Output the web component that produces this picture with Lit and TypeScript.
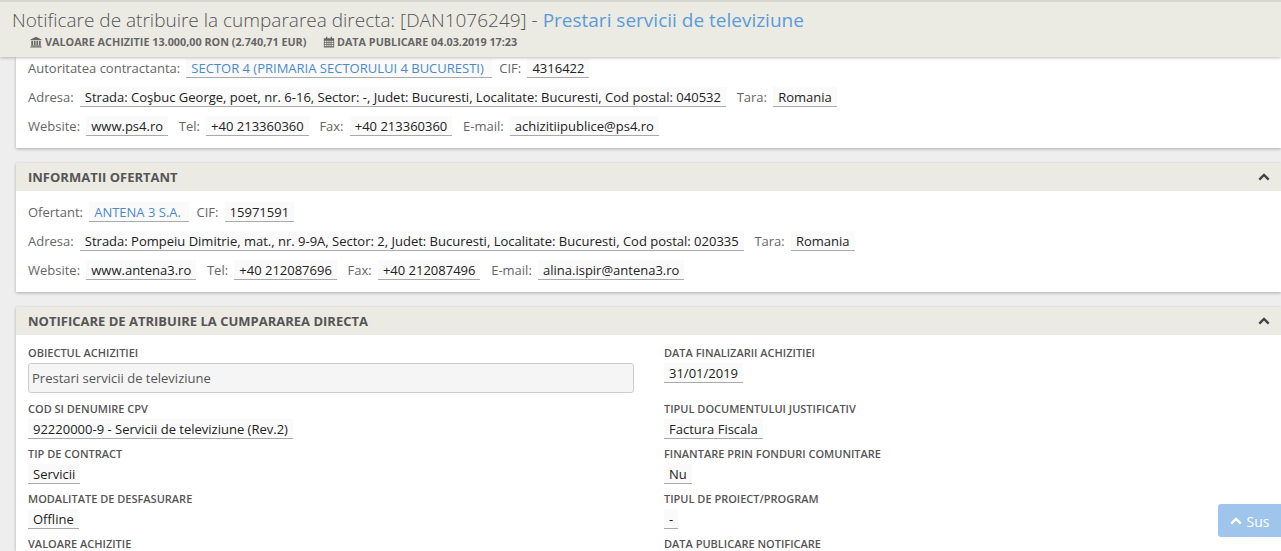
import {html, css, LitElement} from 'lit';
import {customElement} from 'lit/decorators.js';

const chevron = html`<svg class="chev" viewBox="0 0 12 8"><path d="M1.3 6.6 6 1.9l4.7 4.7" fill="none" stroke="currentColor" stroke-width="2.4"/></svg>`;

@customElement('app-root')
export class AppRoot extends LitElement {
  static styles = css`
    :host {
      display: block;
      height: 551px;
      overflow: hidden;
      position: relative;
      background: #eeeeee;
      font-family: "Open Sans", sans-serif;
      font-size: 13px;
      color: #666;
    }
    .top {
      position: absolute;
      top: 0;
      left: 0;
      right: 0;
      height: 57px;
      box-sizing: border-box;
      padding: 6px 12px 0;
      background: #ecebe3;
      border-top: 2px solid #d6d6d0;
      box-shadow: 0 1px 3px rgba(0, 0, 0, 0.25);
      z-index: 2;
    }
    .title {
      font-size: 19px;
      font-weight: 300;
      line-height: 24px;
      color: #555;
      white-space: nowrap;
    }
    .title a {
      color: #5a9bdc;
      font-weight: 400;
    }
    .meta {
      display: flex;
      gap: 17px;
      margin: 3px 0 0 18px;
      font-size: 10.8px;
      font-weight: 700;
      line-height: 14px;
      color: #666;
      white-space: nowrap;
    }
    .meta span {
      display: flex;
      align-items: center;
      gap: 3px;
    }
    .meta svg {
      width: 12px;
      height: 12px;
      fill: #666;
    }
    .meta .cal {
      margin-right: -1.5px;
    }
    .page {
      padding: 57px 0 0 16px;
    }
    .card {
      background: #fff;
      box-shadow: 0 1px 3px rgba(0, 0, 0, 0.28);
      margin-bottom: 15px;
    }
    .head {
      display: flex;
      justify-content: space-between;
      align-items: center;
      height: 28px;
      padding: 0 12px;
      background: #ecebe3;
      font-size: 13px;
      font-weight: 700;
      color: #555;
    }
    .chev {
      width: 12px;
      height: 8px;
      color: #444;
      margin-right: -1px;
    }
    .rows {
      display: flex;
      flex-direction: column;
      gap: 9px;
      padding: 11px 12px 12px;
    }
    .first {
      padding-top: 1px;
    }
    .row {
      display: flex;
      align-items: center;
      height: 20px;
      white-space: nowrap;
    }
    .row label {
      margin-right: 6.2px;
    }
    .val {
      display: inline-block;
      height: 19px;
      line-height: 21px;
      padding: 0 5px;
      background: #fafafa;
      border-bottom: 1px solid #aaa;
      color: #222;
      margin-right: 10.7px;
      white-space: nowrap;
    }
    .val.link {
      color: #4a8ac9;
      padding-right: 8px;
      margin-right: 7.5px;
    }
    .grid {
      display: grid;
      grid-template-columns: 606px 1fr;
      column-gap: 30px;
      padding: 11px 12px 0;
    }
    .field {
      display: flex;
      flex-direction: column;
      align-items: flex-start;
    }
    .field b {
      font-size: 11px;
      font-weight: 600;
      line-height: 14px;
      color: #555;
      white-space: nowrap;
    }
    .field .val {
      margin-top: 3px;
      margin-bottom: 8px;
      margin-right: 0;
    }
    .input {
      align-self: stretch;
      box-sizing: border-box;
      height: 30px;
      line-height: 28px;
      margin: 3px 0 9px;
      padding: 0 3px;
      border: 1px solid #ccc;
      border-radius: 3px;
      background: #f5f5f5;
      color: #555;
    }
    .sus {
      position: absolute;
      right: 0;
      top: 504px;
      width: 63px;
      height: 33px;
      display: flex;
      align-items: center;
      justify-content: center;
      gap: 5px;
      padding-top: 1px;
      box-sizing: border-box;
      background: #9fc5ec;
      border-radius: 3px 0 0 3px;
      color: #fff;
      font-size: 14px;
      z-index: 3;
    }
    .sus .chev {
      color: #fff;
      margin: 0;
    }
  `;

  row(items: [string, string, boolean?][]) {
    return html`<div class="row">
      ${items.map(([l, v, link]) => html`<label>${l}</label><span class="val ${link ? 'link' : ''}">${v}</span>`)}
    </div>`;
  }

  field(label: string, value: string) {
    return html`<div class="field"><b>${label}</b><span class="val">${value}</span></div>`;
  }

  render() {
    return html`
      <div class="top">
        <div class="title">Notificare de atribuire la cumpararea directa: [DAN1076249] - <a>Prestari servicii de televiziune</a></div>
        <div class="meta">
          <span>
            <svg viewBox="0 0 14 14"><path d="M7 1 13.5 4v1h-13V4zM1.5 5.8h2v5h-2zM4.5 5.8h2v5h-2zM7.5 5.8h2v5h-2zM10.5 5.8h2v5h-2zM1 11.2h12v1H1zM.3 12.5h13.4v1H.3z"/></svg>
            VALOARE ACHIZITIE 13.000,00 RON (2.740,71 EUR)
          </span>
          <span>
            <svg class="cal" viewBox="0 0 14 14"><path d="M1 2.5h2.5V1h1.500v1.500h4V1h1.500v1.500H13v11H1zM2 5.500v1.500h2V5.500zm3 0v1.500h1.500V5.500zm2.500 0v1.500H9V5.500zm2.500 0v1.500h2V5.500zM2 8v1.500h2V8zm3 0v1.500h1.500V8zm2.500 0v1.500H9V8zM10 8v1.500h2V8zM2 10.500V12h2v-1.500zm3 0V12h1.500v-1.500zm2.500 0V12H9v-1.500zm2.500 0V12h2v-1.500z" fill-rule="evenodd"/></svg>
            DATA PUBLICARE 04.03.2019 17:23
          </span>
        </div>
      </div>
      <div class="page">
        <div class="card">
          <div class="rows first">
            ${this.row([['Autoritatea contractanta:', 'SECTOR 4 (PRIMARIA SECTORULUI 4 BUCURESTI)', true], ['CIF:', '4316422']])}
            ${this.row([['Adresa:', 'Strada: Coşbuc George, poet, nr. 6-16, Sector: -, Judet: Bucuresti, Localitate: Bucuresti, Cod postal: 040532'], ['Tara:', 'Romania']])}
            ${this.row([['Website:', 'www.ps4.ro'], ['Tel:', '+40 213360360'], ['Fax:', '+40 213360360'], ['E-mail:', 'achizitiipublice@ps4.ro']])}
          </div>
        </div>
        <div class="card">
          <div class="head">INFORMATII OFERTANT ${chevron}</div>
          <div class="rows">
            ${this.row([['Ofertant:', 'ANTENA 3 S.A.', true], ['CIF:', '15971591']])}
            ${this.row([['Adresa:', 'Strada: Pompeiu Dimitrie, mat., nr. 9-9A, Sector: 2, Judet: Bucuresti, Localitate: Bucuresti, Cod postal: 020335'], ['Tara:', 'Romania']])}
            ${this.row([['Website:', 'www.antena3.ro'], ['Tel:', '+40 212087696'], ['Fax:', '+40 212087496'], ['E-mail:', 'alina.ispir@antena3.ro']])}
          </div>
        </div>
        <div class="card">
          <div class="head">NOTIFICARE DE ATRIBUIRE LA CUMPARAREA DIRECTA ${chevron}</div>
          <div class="grid">
            <div class="field"><b>OBIECTUL ACHIZITIEI</b><div class="input">Prestari servicii de televiziune</div></div>
            ${this.field('DATA FINALIZARII ACHIZITIEI', '31/01/2019')}
            ${this.field('COD SI DENUMIRE CPV', '92220000-9 - Servicii de televiziune (Rev.2)')}
            ${this.field('TIPUL DOCUMENTULUI JUSTIFICATIV', 'Factura Fiscala')}
            ${this.field('TIP DE CONTRACT', 'Servicii')}
            ${this.field('FINANTARE PRIN FONDURI COMUNITARE', 'Nu')}
            ${this.field('MODALITATE DE DESFASURARE', 'Offline')}
            ${this.field('TIPUL DE PROIECT/PROGRAM', '-')}
            <div class="field"><b>VALOARE ACHIZITIE</b></div>
            <div class="field"><b>DATA PUBLICARE NOTIFICARE</b></div>
          </div>
        </div>
      </div>
      <div class="sus">${chevron} Sus</div>
    `;
  }
}
